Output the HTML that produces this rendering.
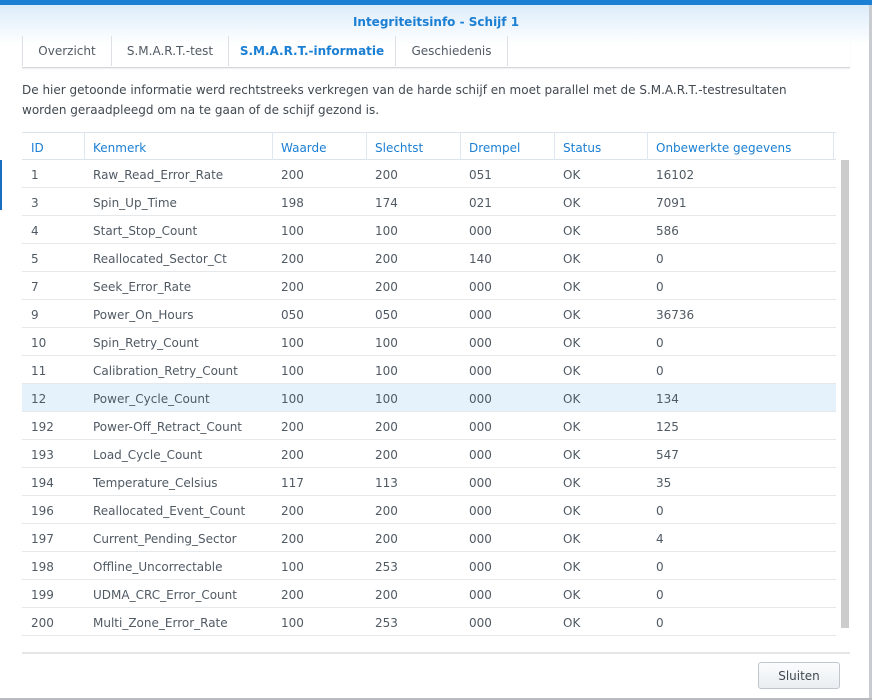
<!DOCTYPE html>
<html><head><meta charset="utf-8"><style>
*{margin:0;padding:0;box-sizing:border-box}
body{width:872px;height:700px;overflow:hidden;background:#fff;font-family:"DejaVu Sans",Verdana,sans-serif;font-size:12px;color:#505a64;position:relative}
.top{position:absolute;left:0;top:0;width:872px;height:5px;background:#1b7fd3}
.grad{position:absolute;left:0;top:5px;width:872px;height:40px;background:linear-gradient(#dcecfa,#fff)}
.rb{position:absolute;right:0;top:5px;width:3px;height:695px;background:#c8ccd0}
.bb{position:absolute;left:0;bottom:0;width:872px;height:2px;background:#b8bcc0}
.lb{position:absolute;left:0;top:160px;width:2px;height:50px;background:#1b6fc0}
.title{position:absolute;left:0;width:872px;top:15px;text-align:center;color:#1b7fd3;font-weight:bold;font-size:12px}
.tabs{position:absolute;left:22px;top:36px;height:32px;width:828px;border-bottom:1px solid #d4d8dc;box-shadow:0 1px 1px #eee}
.tab{position:absolute;top:0;height:30px;line-height:30px;text-align:center;border-left:1px solid #dde1e5}
.tab.a{color:#1b7fd3;font-weight:bold}
.desc{position:absolute;left:22px;top:80px;line-height:20px;color:#404850;white-space:nowrap}
.tbl{position:absolute;left:22px;top:132px;width:828px}
.row{position:absolute;left:0;width:814px;height:28px;border-bottom:1px solid #e6e9ec}
.row span{position:absolute;top:8px;white-space:nowrap}
.hdr{top:0;border-top:1px solid #dde3ea;border-bottom:1px solid #dde3ea;color:#1b7fd3;height:28px}
.sep{position:absolute;top:0;height:27px;width:1px;background:#dde8f2}
.sel{background:#e6f2fb}
.scroll{position:absolute;left:841px;top:160px;width:8px;height:468px;background:#cccccc}
.bot{position:absolute;left:22px;top:652px;width:828px;height:2px;background:#e4e6e8}
.btn{position:absolute;left:758px;top:662px;width:82px;height:27px;border:1px solid #c0c6cc;border-radius:3px;background:linear-gradient(#fbfcfd,#e9eef2);text-align:center;line-height:27px;color:#404850}
</style></head><body>
<div class="top"></div><div class="grad"></div><div class="rb"></div><div class="bb"></div><div class="lb"></div>
<div class="title">Integriteitsinfo - Schijf 1</div>
<div class="tabs">
<div class="tab" style="left:0;width:89px">Overzicht</div>
<div class="tab" style="left:89px;width:117px">S.M.A.R.T.-test</div>
<div class="tab a" style="left:206px;width:167px">S.M.A.R.T.-informatie</div>
<div class="tab" style="left:373px;width:112px">Geschiedenis</div>
<div class="tab" style="left:485px;width:1px"></div>
</div>
<div class="desc">De hier getoonde informatie werd rechtstreeks verkregen van de harde schijf en moet parallel met de S.M.A.R.T.-testresultaten<br>worden geraadpleegd om na te gaan of de schijf gezond is.</div>
<div class="tbl">
<div class="row hdr"><span style="left:9px">ID</span><span style="left:71px">Kenmerk</span><span style="left:259px">Waarde</span><span style="left:353px">Slechtst</span><span style="left:447px">Drempel</span><span style="left:541px">Status</span><span style="left:634px">Onbewerkte gegevens</span>
<div class="sep" style="left:62px"></div><div class="sep" style="left:250px"></div><div class="sep" style="left:344px"></div><div class="sep" style="left:438px"></div><div class="sep" style="left:532px"></div><div class="sep" style="left:625px"></div><div class="sep" style="left:811px"></div></div>
</div>
<div class="tbl" id="t"></div>
<div class="scroll"></div>
<div class="bot"></div>
<div class="btn">Sluiten</div>
<script>
var d=[["1","Raw_Read_Error_Rate","200","200","051","16102"],["3","Spin_Up_Time","198","174","021","7091"],["4","Start_Stop_Count","100","100","000","586"],["5","Reallocated_Sector_Ct","200","200","140","0"],["7","Seek_Error_Rate","200","200","000","0"],["9","Power_On_Hours","050","050","000","36736"],["10","Spin_Retry_Count","100","100","000","0"],["11","Calibration_Retry_Count","100","100","000","0"],["12","Power_Cycle_Count","100","100","000","134"],["192","Power-Off_Retract_Count","200","200","000","125"],["193","Load_Cycle_Count","200","200","000","547"],["194","Temperature_Celsius","117","113","000","35"],["196","Reallocated_Event_Count","200","200","000","0"],["197","Current_Pending_Sector","200","200","000","4"],["198","Offline_Uncorrectable","100","253","000","0"],["199","UDMA_CRC_Error_Count","200","200","000","0"],["200","Multi_Zone_Error_Rate","100","253","000","0"]];
var h="";d.forEach(function(r,i){h+='<div class="row'+(i==8?' sel':'')+'" style="top:'+(28+i*28)+'px"><span style="left:9px">'+r[0]+'</span><span style="left:71px">'+r[1]+'</span><span style="left:259px">'+r[2]+'</span><span style="left:353px">'+r[3]+'</span><span style="left:447px">'+r[4]+'</span><span style="left:541px">OK</span><span style="left:634px">'+r[5]+'</span></div>';});
document.getElementById("t").innerHTML=h;
</script>
</body></html>
